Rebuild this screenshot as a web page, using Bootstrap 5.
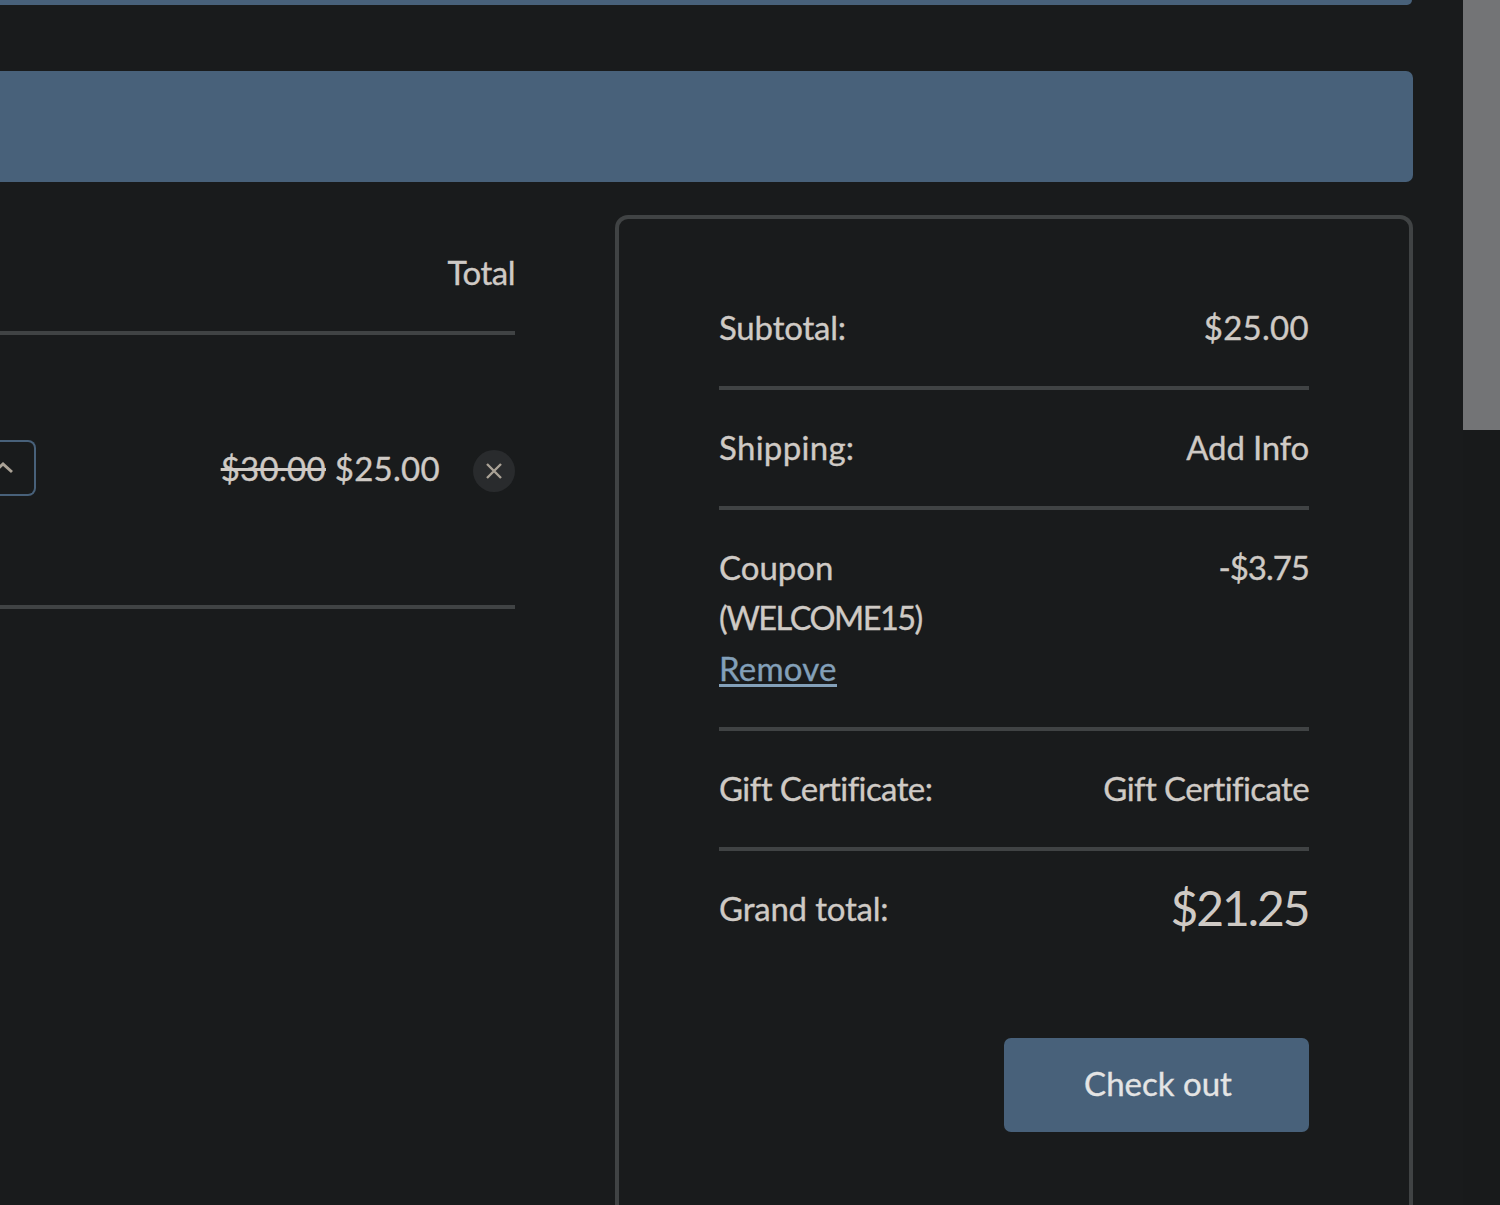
<!DOCTYPE html>
<html lang="en">
<head>
<meta charset="utf-8">
<title>Your Cart</title>
<link href="https://cdn.jsdelivr.net/npm/bootstrap@5.3.0/dist/css/bootstrap.min.css" rel="stylesheet">
<style>
body{background:#191b1c;color:#cfcac5;font-family:Lato,"Open Sans",sans-serif;font-size:33px;line-height:50px;height:1205px;overflow:hidden;-webkit-text-stroke:.35px currentColor}
.page{width:1463px}
.bar{background:#48617a;border-radius:7px}
.bar-a{height:5px;width:1412px;border-radius:0 0 7px 0}
.bar-b{height:111px;width:1413px;margin-top:66px;border-radius:0 7px 7px 0}
.cart-area{margin-top:33px;height:990px}
.items{width:515px}
.items-head{height:120px;padding-top:32px;border-bottom:4px solid #404344;letter-spacing:-.5px}
.item-line{height:274px;border-bottom:4px solid #404344}
.stepper{width:36px;height:56px;margin-bottom:4px;border:2px solid #48617a;border-left:0;border-radius:0 8px 8px 0}
.item-price{margin-bottom:4px;letter-spacing:.3px}
.remove-item{width:42px;height:42px;margin-top:1px;background:#292b2d;margin-left:33px}
.totals{width:798px;height:990px;margin-left:100px;border:4px solid #404344;border-bottom:0;border-radius:13px 13px 0 0;padding:51px 100px 0}
.total-line{padding:31.5px 0 34.6px;border-bottom:4px solid #404344}
.total-line:last-of-type{border-bottom:0}
.coupon-link{color:#83a0b9;text-decoration:none;line-height:32px;border-bottom:3px solid #83a0b9;letter-spacing:.2px}
.tight-sm{letter-spacing:-.2px}
.tight-md{letter-spacing:-.6px}
.tight-lg{letter-spacing:-1px}
.tight-code{letter-spacing:-1.5px;font-size:32.5px}
.loose-sm{letter-spacing:.3px}
.grand{font-size:48px;letter-spacing:-2.1px;margin-right:.5px;-webkit-text-stroke:0}
.checkout{width:305px;height:94px;margin-top:71px;padding:0 0 3px 3px;background:#48617a;color:#e4e4e4;font-size:33px;border:0;border-radius:7px}
.track{width:37px;height:1205px;background:#181a1b}
.thumb{height:430px;background:#737476}
</style>
<script src="https://cdn.jsdelivr.net/npm/bootstrap@5.3.0/dist/js/bootstrap.bundle.min.js"></script>
</head>
<body class="d-flex">
<main class="page flex-shrink-0">
  <div class="bar bar-a"></div>
  <div class="bar bar-b"></div>
  <div class="cart-area d-flex align-items-start">
    <section class="items">
      <div class="items-head text-end">Total</div>
      <div class="item-line d-flex align-items-center">
        <div class="stepper d-flex align-items-center"><svg width="14" height="20" viewBox="0 0 14 20" fill="none" stroke="#aaa296" stroke-width="3"><path d="M-6 14 3 6l9 8"/></svg></div>
        <div class="item-price ms-auto"><s>$30.00</s> <span>$25.00</span></div>
        <div class="remove-item rounded-circle d-flex align-items-center justify-content-center"><svg width="18" height="18" viewBox="0 0 18 18" stroke="#aaa296" stroke-width="2.4"><path d="M2 2l14 14M16 2L2 16"/></svg></div>
      </div>
    </section>
    <section class="totals">
      <div class="total-line d-flex justify-content-between"><span class="tight-sm">Subtotal:</span><span class="loose-sm">$25.00</span></div>
      <div class="total-line d-flex justify-content-between"><span class="loose-sm">Shipping:</span><span class="tight-sm">Add Info</span></div>
      <div class="total-line d-flex justify-content-between"><div>Coupon<br><span class="tight-code">(WELCOME15)</span><br><a class="coupon-link d-inline-block" href="#">Remove</a></div><span class="tight-lg">-$3.75</span></div>
      <div class="total-line d-flex justify-content-between"><span class="tight-md">Gift Certificate:</span><span class="tight-md">Gift Certificate</span></div>
      <div class="total-line d-flex justify-content-between"><span class="tight-sm">Grand total:</span><span class="grand">$21.25</span></div>
      <button class="btn checkout d-block ms-auto">Check out</button>
    </section>
  </div>
</main>
<aside class="track flex-shrink-0"><div class="thumb"></div></aside>
</body>
</html>
